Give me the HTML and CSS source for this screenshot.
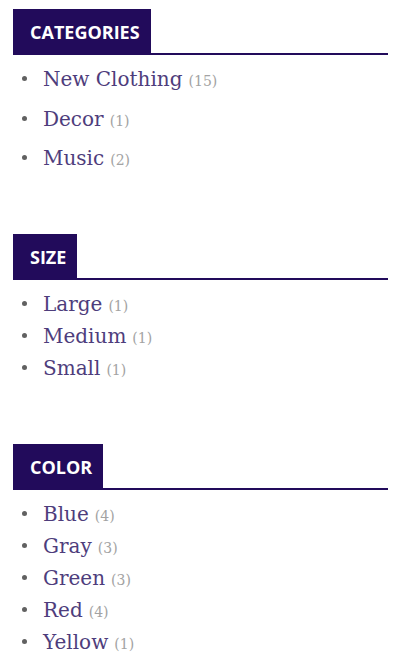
FILE: index.html
```html
<!DOCTYPE html>
<html lang="en">
<head>
  <meta charset="UTF-8" />
  <meta name="viewport" content="width=device-width, initial-scale=1" />
  <title>Shop filters</title>
  <link rel="stylesheet" href="styles.css">
</head>
<body>

  <aside class="sidebar">
    <section class="widget">
      <h3 class="widget-title"><span>Categories</span></h3>
      <ul class="filter-list spaced">
        <li><a href="#">New Clothing</a> <span class="count">(15)</span></li>
        <li><a href="#">Decor</a> <span class="count">(1)</span></li>
        <li><a href="#">Music</a> <span class="count">(2)</span></li>
      </ul>
    </section>

    <section class="widget">
      <h3 class="widget-title"><span>Size</span></h3>
      <ul class="filter-list">
        <li><a href="#">Large</a> <span class="count">(1)</span></li>
        <li><a href="#">Medium</a> <span class="count">(1)</span></li>
        <li><a href="#">Small</a> <span class="count">(1)</span></li>
      </ul>
    </section>

    <section class="widget">
      <h3 class="widget-title"><span>Color</span></h3>
      <ul class="filter-list">
        <li><a href="#">Blue</a> <span class="count">(4)</span></li>
        <li><a href="#">Gray</a> <span class="count">(3)</span></li>
        <li><a href="#">Green</a> <span class="count">(3)</span></li>
        <li><a href="#">Red</a> <span class="count">(4)</span></li>
        <li><a href="#">Yellow</a> <span class="count">(1)</span></li>
      </ul>
    </section>
  </aside>

</body>
</html>
```

FILE: styles.css
```css
* {
  box-sizing: border-box;
}
body {
  margin: 0;
  padding: 9px 27px 0 13px;
  background: #fff;
  font-family: 'DejaVu Serif', 'Liberation Serif', serif;
  color: #666;
}

.widget {
  margin-bottom: 60px;
}
.widget:last-child {
  margin-bottom: 0;
}

/* titre du bloc */
.widget-title {
  display: flex;
  margin: 0;
  border-bottom: 2px solid #220b5b;
  font-family: 'Open Sans', 'Liberation Sans', sans-serif;
  font-size: 18px;
  font-weight: 700;
  text-transform: uppercase;
}
.widget-title span {
  height: 44px;
  padding: 3px 11px 0 17px;
  line-height: 41px;
  background: #220b5b;
  color: #fff;
}

.filter-list {
  list-style: none;
  margin: 8px 0 0 0;
  padding: 0 0 0 9px;
}
.filter-list li {
  display: flex;
  align-items: baseline;
  gap: 6px;
  height: 32px;
  line-height: 32px;
  font-size: 20px;
  white-space: nowrap;
}
.filter-list li::before {
  content: "";
  align-self: center;
  width: 5px;
  height: 5px;
  margin: 0 10px 1px 0;
  border-radius: 50%;
  background: #616161;
}
.filter-list.spaced li + li {
  margin-top: 7.5px;
}
.filter-list a {
  color: #4e3d7c;
  text-decoration: none;
}
.filter-list a:hover {
  color: #220b5b;
}
.count {
  font-size: 14px;
  color: #a3a3a3;
}
```
